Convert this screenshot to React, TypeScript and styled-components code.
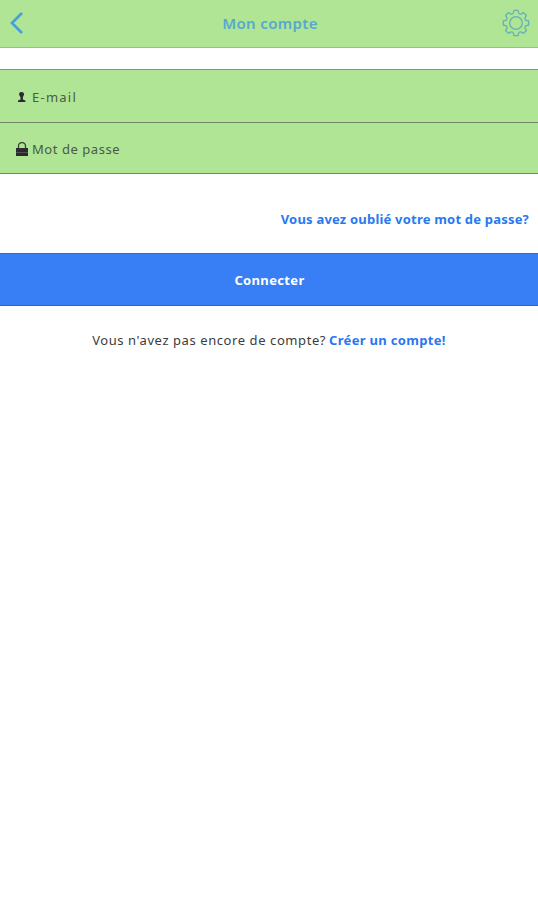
import React from "react";
import styled, { createGlobalStyle } from "styled-components";

const GlobalStyle = createGlobalStyle`
  * { box-sizing: border-box; }
  body { margin: 0; background: #fff; }
`;

const Screen = styled.div`
  min-height: 900px;
  display: flex;
  flex-direction: column;
  background: #fff;
  color: #3c3c3c;
  font-family: "Noto Sans", sans-serif;
  font-size: 13px;
  line-height: 20px;
`;

const Header = styled.header`
  height: 48px;
  display: grid;
  grid-template-columns: 60px 1fr 60px;
  align-items: center;
  background: #afe594;
  border-bottom: 1px solid #9cbd8c;
  color: #55a9d0;
`;

const Title = styled.h1`
  margin: 0;
  padding: 0 0 2px 2px;
  text-align: center;
  font-size: 15px;
  font-weight: 600;
  letter-spacing: 0.35px;
`;

const IconButton = styled.button<{ $end?: boolean }>`
  display: flex;
  justify-content: ${(p) => (p.$end ? "flex-end" : "flex-start")};
  padding: ${(p) => (p.$end ? "0 8px 1px 0" : "0 0 1px 9px")};
  border: 0;
  background: none;
  color: inherit;
`;

const Fields = styled.div`
  margin-top: 21px;
  border-top: 1px solid #819675;
`;

const Field = styled.label<{ $height: number }>`
  height: ${(p) => p.$height}px;
  display: flex;
  align-items: center;
  gap: 4px;
  padding: 2px 16px 0;
  background: #afe594;
  border-bottom: 1px solid #708666;
`;

const FieldIcon = styled.svg`
  width: 12px;
  height: 15px;
  flex: none;
  fill: #2d2832;
`;

const Text = styled.span<{ $spacing: number }>`
  color: #4b5a47;
  letter-spacing: ${(p) => p.$spacing}px;
`;

const Link = styled.a<{ $spacing: number }>`
  color: #2878f0;
  font-weight: 700;
  letter-spacing: ${(p) => p.$spacing}px;
`;

const Forgot = styled.div`
  display: flex;
  justify-content: flex-end;
  padding: 35px 9px 24px 0;
`;

const Submit = styled.button`
  height: 53px;
  padding: 0 0 0 1px;
  border: 0;
  border-top: 1px solid #2e6ce0;
  border-bottom: 1px solid #1f66ea;
  background: #387ef5;
  color: #fff;
  font: inherit;
  font-weight: 700;
  letter-spacing: 0.35px;
`;

const Signup = styled.p`
  display: flex;
  justify-content: center;
  gap: 3px;
  margin: 24px 0 0;
`;

const SignupText = styled.span`
  letter-spacing: 0.58px;
`;

// Eight rounded teeth with shallow valleys between them.
const gearPath = (() => {
  const at = (radius: number, degrees: number) => {
    const a = (degrees * Math.PI) / 180;
    return `${(14 + radius * Math.sin(a)).toFixed(2)} ${(14 - radius * Math.cos(a)).toFixed(2)}`;
  };
  let d = `M${at(12.8, -9)}`;
  for (let i = 0; i < 8; i++) {
    const c = i * 45;
    d += `L${at(12.8, c + 9)}L${at(10.6, c + 14)}Q${at(9.1, c + 22.5)} ${at(10.6, c + 31)}L${at(12.8, c + 36)}`;
  }
  return d + "Z";
})();

export default function App() {
  return (
    <>
      <GlobalStyle />
      <Screen>
        <Header>
          <IconButton aria-label="Retour">
            <svg width="16" height="24" viewBox="0 0 16 24" fill="none" stroke="#459fe0" strokeWidth="2.7">
              <path d="M13 2 3 12l10 10" />
            </svg>
          </IconButton>
          <Title>Mon compte</Title>
          <IconButton $end aria-label="Réglages">
            <svg width="28" height="28" viewBox="0 0 28 28" fill="none" stroke="#62b1b9" strokeWidth="1.3" strokeLinejoin="round">
              <path d={gearPath} />
              <circle cx="14" cy="14" r="6.3" />
            </svg>
          </IconButton>
        </Header>
        <Fields>
          <Field $height={53}>
            <FieldIcon viewBox="0 0 12 15">
              <path d="M5.500 2C3.600 2 2.900 3.200 3.100 4.500 3.300 5.800 4.400 6.400 4.500 7.300V9.500L2 10.600V12h7.400v-1.400L6.900 9.500V7.300C7 6.400 7.900 5.800 8 4.500 8.100 3.200 7.400 2 5.500 2Z" />
            </FieldIcon>
            <Text $spacing={1.25}>E-mail</Text>
          </Field>
          <Field $height={51}>
            <FieldIcon viewBox="0 0 12 15">
              <path d="M0 6h12v4.200H0ZM0 10.600h12V14H0Z" />
              <path d="M2.500 6.500V4a3.500 3.500 0 0 1 7 0v2.500" fill="none" stroke="#3b403b" strokeWidth="1.300" />
            </FieldIcon>
            <Text $spacing={0.55}>Mot de passe</Text>
          </Field>
        </Fields>
        <Forgot>
          <Link $spacing={0.2}>Vous avez oublié votre mot de passe?</Link>
        </Forgot>
        <Submit>Connecter</Submit>
        <Signup>
          <SignupText>Vous n'avez pas encore de compte?</SignupText>
          <Link $spacing={0.32}>Créer un compte!</Link>
        </Signup>
      </Screen>
    </>
  );
}
